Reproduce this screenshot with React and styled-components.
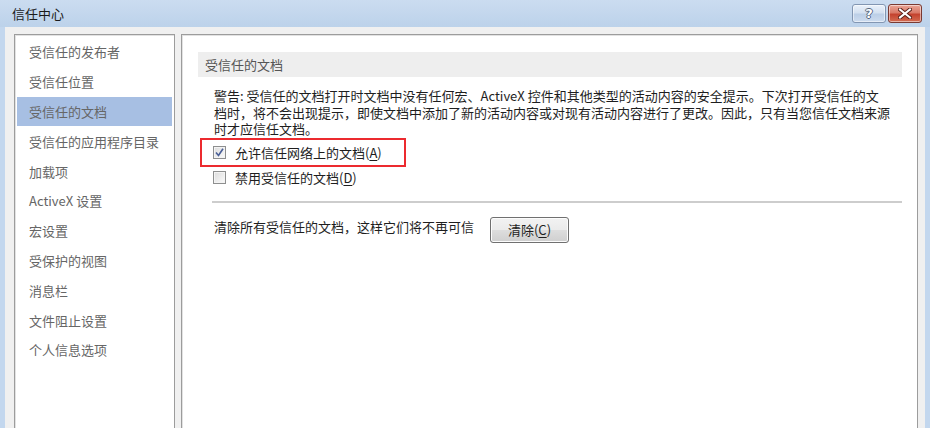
import React from "react";
import styled, { createGlobalStyle } from "styled-components";

const Global = createGlobalStyle`
  html, body { margin: 0; padding: 0; background: #c4d8ef; }
  body { font-family: "Noto Sans CJK SC", "Noto Sans", sans-serif; }
`;

const Window = styled.div`
  width: 930px;
  height: 428px;
  display: flex;
  flex-direction: column;
  background: #c3d7ee;
  overflow: hidden;
`;

const TitleBar = styled.div`
  height: 27px;
  flex: none;
  display: flex;
  align-items: flex-start;
  justify-content: space-between;
  padding: 0 8px 0 12px;
  background: linear-gradient(#cbdcf0, #bcd2ea);
`;

const Title = styled.div`
  font-size: 13px;
  line-height: 27px;
  color: #1b1b1b;
`;

const Controls = styled.div`
  display: flex;
  gap: 2px;
  margin-top: 4px;
`;

const CtrlButton = styled.div`
  width: ${(p) => p.$w}px;
  height: 19px;
  box-sizing: border-box;
  border: 1px solid ${(p) => (p.$close ? "#7a3a32" : "#8296b2")};
  border-radius: 3px;
  display: flex;
  align-items: center;
  justify-content: center;
  background: ${(p) =>
    p.$close
      ? "linear-gradient(#eaa597 0%, #d97a68 45%, #c4432f 55%, #d36d52 100%)"
      : "linear-gradient(#eaf1fa 0%, #d4e1f1 45%, #bccfe7 55%, #cddcef 100%)"};
  box-shadow: inset 0 0 0 1px rgba(255, 255, 255, 0.5);
`;

const HelpGlyph = styled.span`
  font-family: "DejaVu Sans", sans-serif;
  font-weight: bold;
  font-size: 13px;
  line-height: 1;
  color: #fff;
  text-shadow: -1px 0 #56677f, 1px 0 #56677f, 0 -1px #56677f, 0 1px #56677f;
`;

const Body = styled.div`
  flex: 1;
  margin: 0 5px;
  background: #f0f0f0;
  padding: 7px 7px 0 9px;
  display: flex;
  gap: 6px;
  min-height: 0;
`;

const Panel = styled.div`
  background: #fff;
  border: 1px solid #9c9c9c;
  box-shadow: inset 1px 1px 0 #e2e2e2;
  border-bottom: none;
`;

const NavPanel = styled(Panel)`
  width: 161px;
  flex: none;
  box-sizing: border-box;
  padding: 2px 2px 0 2px;
`;

const NavItem = styled.div`
  height: 29.8px;
  display: flex;
  align-items: center;
  padding-left: 12px;
  font-size: 13px;
  color: #666;
  background: ${(p) => (p.$active ? "#a7bfe3" : "transparent")};
`;

const ContentPanel = styled(Panel)`
  flex: 1;
  padding-top: 17px;
`;

const SectionHeader = styled.div`
  margin: 0 15px 0 16px;
  height: 25px;
  background: #eeeeee;
  display: flex;
  align-items: center;
  padding-left: 7px;
  font-size: 13px;
  color: #555;
`;

const Warning = styled.div`
  margin: 11px 0 0 32px;
  display: flex;
  flex-direction: column;
`;

const WarningLine = styled.span`
  font-size: 13px;
  line-height: 16.5px;
  height: 16.5px;
  color: #1e1e1e;
  white-space: nowrap;
`;

const Options = styled.div`
  margin: 0 0 0 18px;
  display: flex;
  flex-direction: column;
  align-items: flex-start;
`;

const Highlight = styled.div`
  width: 206px;
  height: 29px;
  box-sizing: border-box;
  border: 2px solid #ec2a2f;
  display: flex;
  align-items: center;
  padding: 1px 0 0 11px;
`;

const OptionRow = styled.label`
  display: flex;
  align-items: center;
  gap: 9px;
  font-size: 13px;
  color: #1e1e1e;
  height: ${(p) => p.$h || 22}px;
  padding-left: ${(p) => p.$pl || 0}px;
  white-space: nowrap;
`;

const Box = styled.span`
  width: 13px;
  height: 13px;
  box-sizing: border-box;
  border: 1px solid #8e8f8f;
  background: linear-gradient(135deg, #dcdcdc, #fbfbfb);
  box-shadow: inset 0 0 0 1px #f4f4f4;
  display: flex;
  align-items: center;
  justify-content: center;
  flex: none;
`;

const U = styled.span`
  text-decoration: underline;
  text-underline-offset: 2px;
`;

const Separator = styled.div`
  margin: 12px 15px 0 30px;
  height: 2px;
  background: #cdcdcd;
`;

const ClearRow = styled.div`
  margin: 14px 0 0 32px;
  display: flex;
  align-items: flex-start;
  gap: 16px;
`;

const ClearText = styled.span`
  font-size: 13px;
  line-height: 17px;
  color: #1e1e1e;
  margin-top: 1px;
  white-space: nowrap;
`;

const Button = styled.button`
  width: 79px;
  height: 26px;
  border: 1px solid #707070;
  border-radius: 3px;
  background: linear-gradient(#f2f2f2 0%, #ebebeb 48%, #dddddd 52%, #cfcfcf 100%);
  box-shadow: inset 0 0 0 1px #fcfcfc;
  font-family: "Noto Sans CJK SC", sans-serif;
  font-size: 13px;
  color: #1e1e1e;
  padding: 0;
`;

const Checkbox = ({ checked }) => (
  <Box>
    {checked && (
      <svg width="9" height="9" viewBox="0 0 9 9">
        <path d="M1 4.5 L3.5 7.5 L8 0.8" fill="none" stroke="#4a5f97" strokeWidth="1.6" />
      </svg>
    )}
  </Box>
);

const navItems = [
  "受信任的发布者",
  "受信任位置",
  "受信任的文档",
  "受信任的应用程序目录",
  "加载项",
  "ActiveX 设置",
  "宏设置",
  "受保护的视图",
  "消息栏",
  "文件阻止设置",
  "个人信息选项",
];

const warningLines = [
  "警告: 受信任的文档打开时文档中没有任何宏、ActiveX 控件和其他类型的活动内容的安全提示。下次打开受信任的文",
  "档时，将不会出现提示，即使文档中添加了新的活动内容或对现有活动内容进行了更改。因此，只有当您信任文档来源",
  "时才应信任文档。",
];

export default function App() {
  return (
    <>
      <Global />
      <Window>
        <TitleBar>
          <Title>信任中心</Title>
          <Controls>
            <CtrlButton $w={34}>
              <HelpGlyph>?</HelpGlyph>
            </CtrlButton>
            <CtrlButton $w={34} $close>
              <svg width="14" height="11" viewBox="0 0 14 11">
                <path d="M2 1.5 L12 9.5 M12 1.5 L2 9.5" stroke="#5a2018" strokeWidth="4" strokeLinecap="square" />
                <path d="M2 1.5 L12 9.5 M12 1.5 L2 9.5" stroke="#fff" strokeWidth="2" strokeLinecap="square" />
              </svg>
            </CtrlButton>
          </Controls>
        </TitleBar>
        <Body>
          <NavPanel>
            {navItems.map((t) => (
              <NavItem key={t} $active={t === "受信任的文档"}>
                {t}
              </NavItem>
            ))}
          </NavPanel>
          <ContentPanel>
            <SectionHeader>受信任的文档</SectionHeader>
            <Warning>
              {warningLines.map((l) => (
                <WarningLine key={l}>{l}</WarningLine>
              ))}
            </Warning>
            <Options>
              <Highlight>
                <OptionRow $h={23}>
                  <Checkbox checked />
                  <span>
                    允许信任网络上的文档(<U>A</U>)
                  </span>
                </OptionRow>
              </Highlight>
              <OptionRow $h={22} $pl={13}>
                <Checkbox />
                <span>
                  禁用受信任的文档(<U>D</U>)
                </span>
              </OptionRow>
            </Options>
            <Separator />
            <ClearRow>
              <ClearText>清除所有受信任的文档，这样它们将不再可信</ClearText>
              <Button>
                清除(<U>C</U>)
              </Button>
            </ClearRow>
          </ContentPanel>
        </Body>
      </Window>
    </>
  );
}
